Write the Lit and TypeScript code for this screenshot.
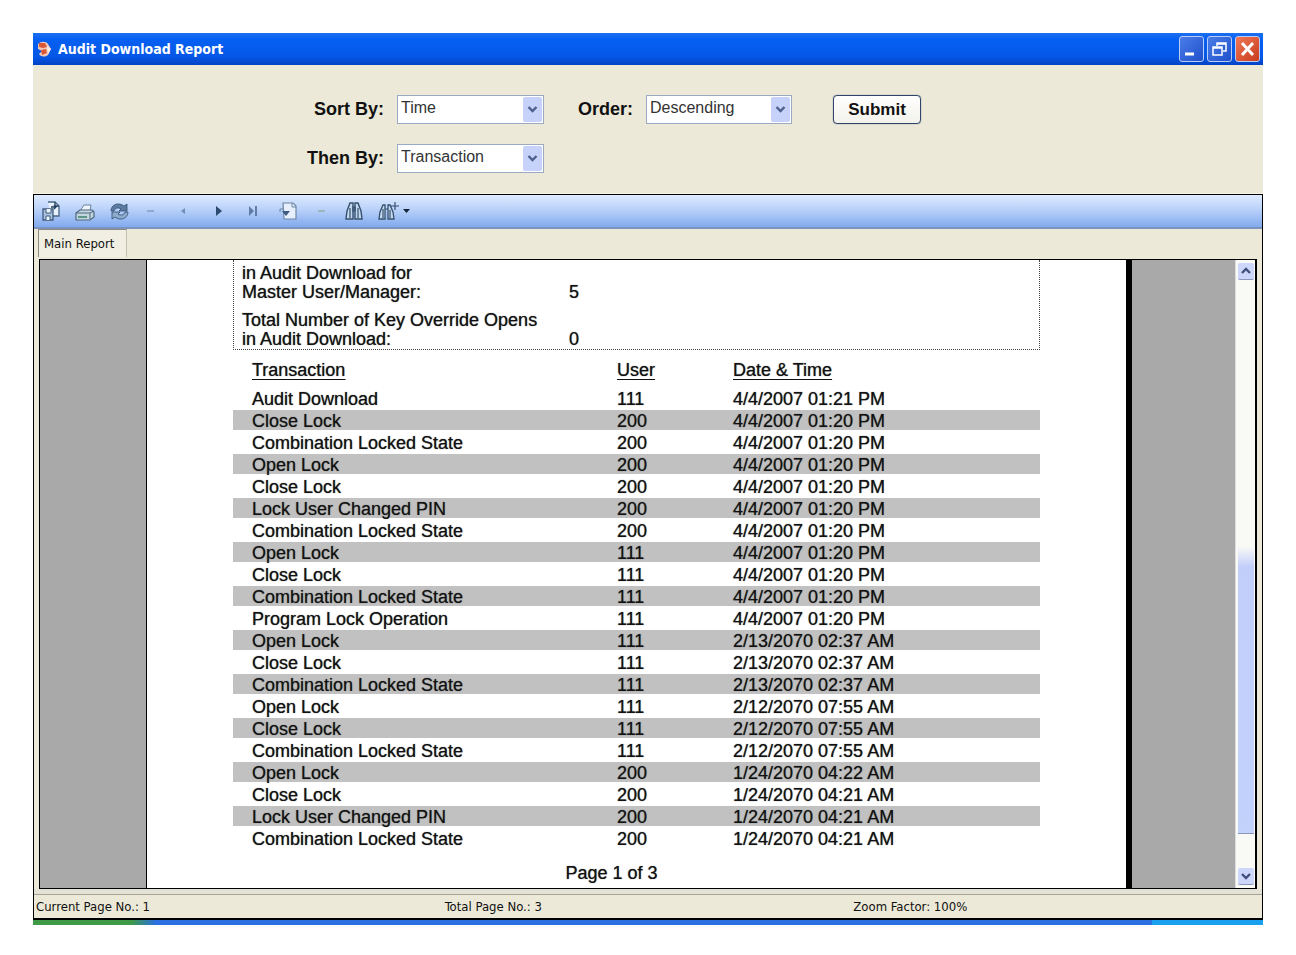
import { LitElement, html, css, svg } from "lit";
import { customElement } from "lit/decorators.js";

const ROWS: [string, string, string][] = [
  ["Audit Download", "111", "4/4/2007 01:21 PM"],
  ["Close Lock", "200", "4/4/2007 01:20 PM"],
  ["Combination Locked State", "200", "4/4/2007 01:20 PM"],
  ["Open Lock", "200", "4/4/2007 01:20 PM"],
  ["Close Lock", "200", "4/4/2007 01:20 PM"],
  ["Lock User Changed PIN", "200", "4/4/2007 01:20 PM"],
  ["Combination Locked State", "200", "4/4/2007 01:20 PM"],
  ["Open Lock", "111", "4/4/2007 01:20 PM"],
  ["Close Lock", "111", "4/4/2007 01:20 PM"],
  ["Combination Locked State", "111", "4/4/2007 01:20 PM"],
  ["Program Lock Operation", "111", "4/4/2007 01:20 PM"],
  ["Open Lock", "111", "2/13/2070 02:37 AM"],
  ["Close Lock", "111", "2/13/2070 02:37 AM"],
  ["Combination Locked State", "111", "2/13/2070 02:37 AM"],
  ["Open Lock", "111", "2/12/2070 07:55 AM"],
  ["Close Lock", "111", "2/12/2070 07:55 AM"],
  ["Combination Locked State", "111", "2/12/2070 07:55 AM"],
  ["Open Lock", "200", "1/24/2070 04:22 AM"],
  ["Close Lock", "200", "1/24/2070 04:21 AM"],
  ["Lock User Changed PIN", "200", "1/24/2070 04:21 AM"],
  ["Combination Locked State", "200", "1/24/2070 04:21 AM"],
];

const TOOLS: [string, unknown][] = [
  ["Export", svg`<path d="M14 5h7l4 4v10h-8" fill="#e8f1fc" stroke="#4a6585" stroke-width="1.3"/><path d="M21 5v4h4M17 10h5m-2-2 2 2-2 2" fill="none" stroke="#23405f" stroke-width="1.3"/><path d="M9 12h10v11H9z" fill="#a9c2df" stroke="#405c7c" stroke-width="1.3"/><path d="M12 12v4h5v-4M12 23v-4h4v4" fill="#edf5ff" stroke="#405c7c"/>`],
  ["Print", svg`<path d="m12 14 4-6h7l-1 6z" fill="#eef5fd" stroke="#6d849c"/><path d="m8 16 4-3h12l2 2v5l-4 3H8z" fill="#c3d6df" stroke="#4d687e" stroke-width="1.2"/><path d="M8 16h14l4-2M22 16v6" fill="none" stroke="#4d687e"/><path d="M10 20h9" stroke="#3b7f6c" stroke-width="1.5"/>`],
  ["Refresh", svg`<path d="M9 14c0-7 8-9 13-5l3-2v7h-8l2-2c-3-2-6-1-7 2z" fill="#5c7ba0" stroke="#2f4c70" stroke-width=".8"/><path d="M26 15c0 7-8 9-13 5l-3 2v-7h8l-2 2c3 2 6 1 7-2z" fill="#8eabc9" stroke="#2f4c70" stroke-width=".8"/>`],
  ["First page", svg`<path d="M11 14h7" stroke="#8da9cc" stroke-width="2"/>`],
  ["Previous page", svg`<path d="m15 11-4 3 4 3z" fill="#6f8fb8"/>`],
  ["Next page", svg`<path d="m12 9 6 5-6 5z" fill="#2d4a70"/>`],
  ["Last page", svg`<path d="m11 9 5 5-5 5zM17 9h2v10h-2z" fill="#5f7da6"/>`],
  ["Go to page", svg`<path d="M11 6h10l3 3v13H12z" fill="#e6effb" stroke="#6c86a6" stroke-width="1.2"/><path d="M20 6v4h4M8 15v-3h4" fill="none" stroke="#6c86a6"/><path d="M10 14h8l-4 5z" fill="#3d5a80"/>`],
  ["Close view", svg`<path d="M12 14h7" stroke="#9db3bd" stroke-width="2"/>`],
  ["Find", svg`<path d="m6 22 1-8 3-8h3v16zM15 22V6h3l3 8 1 8z" fill="#c5d9ee" stroke="#35506f" stroke-width="1.4"/><path d="M13 10h2v4h-2zM10 11v10M18 11v10" fill="none" stroke="#35506f" stroke-width="1.2"/>`],
  ["Zoom", svg`<path d="m5 22 1-7 3-7h2v14zM14 22V8h2l3 7 1 7z" fill="#c5d9ee" stroke="#35506f" stroke-width="1.3"/><path d="M11 12h3M9 12v9M16 13v8M17 9h8M21 5v8" fill="none" stroke="#35506f" stroke-width="1.2"/><path d="M29 12h7l-3.500 4z" fill="#14233a"/>`],
];

@customElement("app-root")
export class AppRoot extends LitElement {
  static styles = css`
    :host {
      display: block;
      box-sizing: border-box;
      min-height: 100vh;
      padding: 33px 33px 31px;
      background: #fff;
      color: #111;
      font-family: "Liberation Sans", Arial, sans-serif;
    }
    * { box-sizing: border-box; }
    button { font: inherit; padding: 0; border: 0; background: none; color: inherit; }
    svg { display: block; }
    .window { background: #ece9d8; }
    .title {
      display: flex;
      align-items: center;
      gap: 5px;
      height: 32px;
      padding: 0 3px 0 2px;
      background: linear-gradient(#1c6ff0, #0660f2 20%, #0557e6 75%, #0442c4);
      color: #fff;
    }
    .title h1 {
      flex: 1;
      margin: 0;
      font: 700 14px/20px "DejaVu Sans Condensed", "Noto Sans", sans-serif;
    }
    .controls { display: flex; gap: 3px; }
    .control {
      width: 25px;
      height: 26px;
      border: 1px solid #b9cdf5;
      border-radius: 3px;
      background: linear-gradient(135deg, #4b7de8, #1f50cc);
    }
    .control.close { background: linear-gradient(135deg, #ee7858, #c93c1c); }
    .form {
      display: grid;
      grid-template-columns: 78px 147px 76px 146px 116px;
      column-gap: 13px;
      row-gap: 20px;
      align-items: center;
      align-content: start;
      padding: 30px 0 20px 273px;
      border-bottom: 1px solid #f8f6ec;
    }
    .form label {
      font-size: 18px;
      line-height: 29px;
      font-weight: 700;
      text-align: right;
      white-space: nowrap;
    }
    .combo { display: grid; height: 29px; border: 1px solid #9aa9c4; background: #fff; }
    .combo select, .combo svg { grid-area: 1 / 1; }
    .combo select {
      appearance: none;
      width: 100%;
      padding: 0 0 3px 3px;
      border: 0;
      background: transparent;
      color: #333;
      font: 16px/20px "Liberation Sans", Arial, sans-serif;
    }
    .combo svg { justify-self: end; align-self: center; margin-right: 1px; pointer-events: none; }
    .submit {
      justify-self: end;
      width: 88px;
      height: 29px;
      border: 1px solid #31456b;
      border-radius: 4px;
      background: linear-gradient(#fff, #f3f2ec);
      box-shadow: 0 0 1px #31456b;
      font-size: 17px;
      font-weight: 700;
    }
    .report { border: 1px solid #000; border-width: 1px 1px 0; }
    .toolbar {
      display: flex;
      height: 34px;
      border-bottom: 2px solid #7c94bd;
      background: linear-gradient(#deebff, #b9d1f9 45%, #82aaee);
    }
    .tool { width: 34px; height: 32px; }
    .tool svg { overflow: visible; }
    .tabs { height: 30px; padding: 0 4px; display: flex; }
    .tab {
      width: 89px;
      height: 28px;
      padding-left: 5px;
      border: 1px solid #8b8980;
      border-right-color: #c4c1b3;
      border-bottom: 0;
      background: #f1efe3;
      font: 13px/20px "DejaVu Sans Condensed", "Noto Sans", sans-serif;
      text-align: left;
      white-space: nowrap;
    }
    .viewer {
      display: grid;
      grid-template-columns: 107px 1fr 6px 103px 20px;
      margin: 0 5px;
      border: 1px solid #000;
      border-right-width: 2px;
      background: #a9a9a9;
    }
    .gutter { border-right: 1px solid #000; }
    .page { padding: 0 86px 4px; background: #fff; font-size: 18px; text-shadow: 0 0 1px #555; }
    .edge { background: #000; }
    .summary {
      display: grid;
      grid-template-columns: 327px 1fr;
      align-items: end;
      row-gap: 9px;
      margin: 0;
      padding: 4px 8px 0;
      border: 1px dotted #444;
      border-top: 0;
      line-height: 19px;
    }
    .summary dt, .summary dd { margin: 0; white-space: nowrap; }
    .log {
      width: 100%;
      table-layout: fixed;
      border-collapse: collapse;
      line-height: 20px;
    }
    .log th {
      height: 38px;
      padding: 2px 0 0;
      font-weight: 400;
      text-align: left;
      text-decoration: underline;
      text-underline-offset: 3px;
    }
    .log td { height: 22px; padding: 0; white-space: nowrap; }
    .log th:first-child, .log td:first-child { padding-left: 19px; width: 384px; }
    .log th:nth-child(2) { width: 116px; }
    .log tbody tr:nth-child(even) { background: linear-gradient(#c1c1c1, #c1c1c1) 0 0 / 100% 20px no-repeat; }
    .pager { margin: 12px 0 0; padding-right: 50px; line-height: 22px; text-align: center; }
    .scroll {
      display: flex;
      flex-direction: column;
      align-items: center;
      padding: 3px 2px;
      border-left: 1px solid #ddd;
      background: #f9f9f6;
    }
    .arrow { width: 16px; height: 17px; border-radius: 2px; background: #cdd7fb; border-bottom: 1px solid #8e97bb; }
    .track { flex: 1; width: 16px; display: flex; flex-direction: column; padding-bottom: 34px; }
    .thumb { height: 287px; margin-top: auto; background: linear-gradient(#f9f9f6, #c2cefa 20px, #c2d2fb); border-bottom: 1px solid #8b95b8; }
    .status {
      display: grid;
      grid-template-columns: 1fr 1fr 1fr;
      height: 31px;
      padding: 8px 0 0 2px;
      border: 1px solid #000;
      border-width: 0 1px 2px;
      background: linear-gradient(#e4e1d6 5px, #a5a296 5px, #a5a296 6px, #ece9d8 6px);
      font: 13px/20px "DejaVu Sans Condensed", "Noto Sans", sans-serif;
    }
    .taskbar { height: 5px; background: linear-gradient(90deg, #3f9a48 0 8%, #2b6fe0 10% 91%, #1aa0ee 91%); }
  `;

  private combo(id: string, value: string, others: string[]) {
    return html`<div class="combo">
      <select id=${id}>
        <option selected>${value}</option>
        ${others.map((o) => html`<option>${o}</option>`)}
      </select>
      <svg width="19" height="25" viewBox="0 0 19 25"><rect width="19" height="25" rx="2" fill="#c6d2fa"/><path d="m5.500 10 4 4 4-4" fill="none" stroke="#4d5f8c" stroke-width="2.400"/></svg>
    </div>`;
  }

  render() {
    return html`<main class="window">
      <header class="title">
        <svg width="18" height="18" viewBox="0 0 18 18"><path d="M3 4c3-3 8-3 10 0l3 5-3 6c-4 3-8 1-9-1l3-3-4-2z" fill="#f0c8b8"/><path d="M4 3h6l2 4-4 1-4-1zM6 10l5-1 1 4-5 2z" fill="#d95735"/><path d="m12 6 4 3-3 5z" fill="#fff0e6"/></svg>
        <h1>Audit Download Report</h1>
        <div class="controls">
          <button class="control" aria-label="Minimize"><svg width="23" height="24"><path d="M5 17h9" stroke="#fff" stroke-width="3"/></svg></button>
          <button class="control" aria-label="Restore"><svg width="23" height="24"><path d="M9 9V6h9v8h-3M9 7h9M5 10h9v8H5zM5 11h9" fill="none" stroke="#fff" stroke-width="1.500"/></svg></button>
          <button class="control close" aria-label="Close"><svg width="23" height="24"><path d="m6 6 11 12M17 6 6 18" stroke="#fff" stroke-width="3"/></svg></button>
        </div>
      </header>
      <form class="form" @submit=${(e: Event) => e.preventDefault()}>
        <label for="sort">Sort By:</label>
        ${this.combo("sort", "Time", ["Transaction", "User"])}
        <label for="order">Order:</label>
        ${this.combo("order", "Descending", ["Ascending"])}
        <button class="submit">Submit</button>
        <label for="then">Then By:</label>
        ${this.combo("then", "Transaction", ["Time", "User"])}
      </form>
      <section class="report">
        <nav class="toolbar">
          ${TOOLS.map(([name, icon]) => html`<button class="tool" aria-label=${name}><svg width="34" height="28" viewBox="0 0 34 28">${icon}</svg></button>`)}
        </nav>
        <div class="tabs"><button class="tab">Main Report</button></div>
        <div class="viewer">
          <div class="gutter"></div>
          <article class="page">
            <dl class="summary">
              <dt>in Audit Download for<br />Master User/Manager:</dt><dd>5</dd>
              <dt>Total Number of Key Override Opens<br />in Audit Download:</dt><dd>0</dd>
            </dl>
            <table class="log">
              <thead><tr><th>Transaction</th><th>User</th><th>Date &amp; Time</th></tr></thead>
              <tbody>${ROWS.map((r) => html`<tr>${r.map((c) => html`<td>${c}</td>`)}</tr>`)}</tbody>
            </table>
            <p class="pager">Page 1 of 3</p>
          </article>
          <div class="edge"></div>
          <div></div>
          <div class="scroll">
            <button class="arrow" aria-label="Scroll up"><svg width="16" height="16"><path d="m4 10 4-4 4 4" fill="none" stroke="#40507c" stroke-width="2.400"/></svg></button>
            <div class="track"><div class="thumb"></div></div>
            <button class="arrow" aria-label="Scroll down"><svg width="16" height="16"><path d="m4 6 4 4 4-4" fill="none" stroke="#40507c" stroke-width="2.400"/></svg></button>
          </div>
        </div>
      </section>
      <footer class="status"><span>Current Page No.: 1</span><span>Total Page No.: 3</span><span>Zoom Factor: 100%</span></footer>
      <div class="taskbar"></div>
    </main>`;
  }
}
